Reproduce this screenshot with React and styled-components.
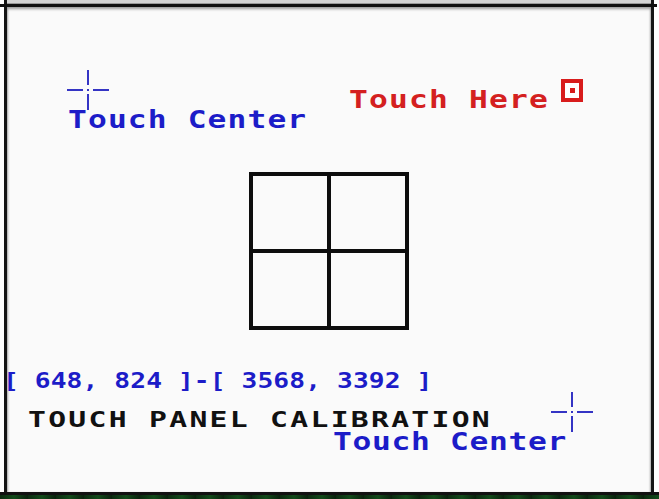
import React from "react";
import styled, { createGlobalStyle } from "styled-components";

const Global = createGlobalStyle`
  html, body {
    margin: 0;
    padding: 0;
    background: #ffffff;
  }
`;

const Screen = styled.div`
  width: 659px;
  height: 499px;
  display: flex;
  flex-direction: column;
  background: #ffffff;
  overflow: hidden;
  font-family: "DejaVu Sans Mono", "Liberation Mono", monospace;
  font-weight: bold;
`;

const Body = styled.div`
  flex: 1;
  box-sizing: border-box;
  width: 650px;
  margin-left: 4px;
  border-left: 3px solid #151515;
  border-right: 3px solid #151515;
  display: flex;
  flex-direction: column;
`;

const TopBand = styled.div`
  height: 4px;
  background: #d4d4d4;
  border-bottom: 1px solid #9a9a9a;
  box-sizing: border-box;
`;

const TopRule = styled.div`
  height: 3px;
  margin: 0 -6px 0 -7px;
  background: #111;
`;

const Canvas = styled.div`
  flex: 1;
  position: relative;
  background: #fafafa;
  box-shadow: inset 0 3px 3px -1px #9a9a9a, inset 2px 0 2px -1px #b0b0b0,
    inset -2px 0 2px -1px #b0b0b0;
  display: flex;
  flex-direction: column;
  align-items: center;
`;

const Grid = styled.div`
  margin-top: 165px;
  width: 160px;
  height: 158px;
  box-sizing: border-box;
  border: 4px solid #0d0d0d;
  background: #0d0d0d;
  display: grid;
  grid-template-columns: 1fr 1fr;
  grid-template-rows: 1fr 1fr;
  gap: 4px;
`;

const Cell = styled.div`
  background: #fafafa;
`;

// bitmap-style label: monospace glyphs stretched wide like the panel font
const Label = styled.div`
  position: absolute;
  left: ${(p) => p.x}px;
  top: ${(p) => p.y}px;
  white-space: pre;
  line-height: 1;
  font-size: ${(p) => p.size || 25}px;
  letter-spacing: ${(p) => p.spacing ?? 0.9}px;
  color: ${(p) => p.color || "#111"};
  transform: scaleX(${(p) => p.stretch || 1.25});
  transform-origin: left top;
`;

const Mark = styled.svg`
  position: absolute;
  left: ${(p) => p.x}px;
  top: ${(p) => p.y}px;
`;

const Target = styled.div`
  position: absolute;
  left: ${(p) => p.x}px;
  top: ${(p) => p.y}px;
  width: 22px;
  height: 23px;
  box-sizing: border-box;
  border: 4px solid #d81c1c;
  background: #fff;
  display: flex;
  align-items: center;
  justify-content: center;

  &::after {
    content: "";
    width: 5px;
    height: 5px;
    background: #d81c1c;
  }
`;

const BottomRule = styled.div`
  height: 3px;
  background: #111;
`;

const GreenStrip = styled.div`
  height: 4px;
  background: repeating-linear-gradient(
    90deg,
    #0c2a10 0px,
    #124a1a 14px,
    #0a200c 28px
  );
`;

const BLUE = "#1c1cc8";

const Crosshair = ({ x, y }) => (
  <Mark x={x} y={y} width="42" height="40" viewBox="0 0 42 40">
    <g stroke="#3434c4" strokeWidth="2">
      <line x1="0" y1="20" x2="16" y2="20" />
      <line x1="20" y1="20" x2="22" y2="20" />
      <line x1="26" y1="20" x2="42" y2="20" />
      <line x1="21" y1="0" x2="21" y2="15" />
      <line x1="21" y1="24" x2="21" y2="40" />
    </g>
  </Mark>
);

export default function App() {
  return (
    <>
      <Global />
      <Screen>
        <Body>
          <TopBand />
          <TopRule />
          <Canvas>
            <Crosshair x={60} y={63} />
            <Label x={61} y={100} color={BLUE}>
              Touch Center
            </Label>
            <Label x={342} y={80} spacing={0.95} color="#d42020">
              Touch Here
            </Label>
            <Target x={554} y={72} />

            <Grid>
              <Cell />
              <Cell />
              <Cell />
              <Cell />
            </Grid>

            <Label x={-4} y={364} size={21} spacing={0.08} color={BLUE}>
              [ 648, 824 ]-[ 3568, 3392 ]
            </Label>
            <Label x={21} y={402} size={22} spacing={1.7} stretch={1.35}>
              TOUCH PANEL CALIBRATION
            </Label>
            <Label x={326} y={422} spacing={0.55} color={BLUE}>
              Touch Center
            </Label>
            <Crosshair x={544} y={385} />
          </Canvas>
        </Body>
        <BottomRule />
        <GreenStrip />
      </Screen>
    </>
  );
}
